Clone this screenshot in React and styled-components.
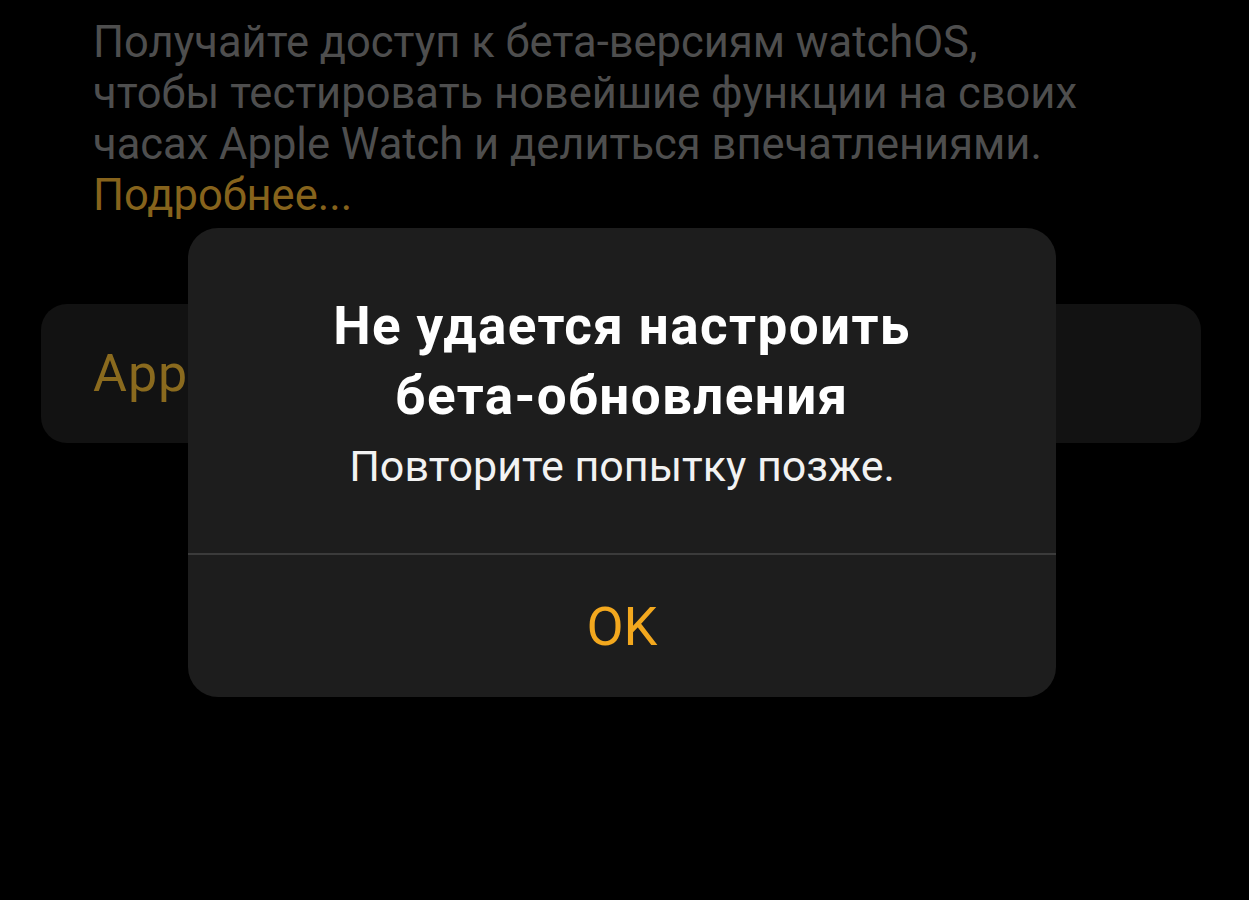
import React from 'react';
import styled, { createGlobalStyle } from 'styled-components';

const Global = createGlobalStyle`
  html, body {
    margin: 0;
    padding: 0;
    background: #000;
  }
  body {
    font-family: Roboto, "Liberation Sans", sans-serif;
    -webkit-font-smoothing: antialiased;
  }
`;

const S = {
  Screen: styled.main`
    position: relative;
    width: 1249px;
    height: 900px;
    overflow: hidden;
    background: #000;
    padding-top: 17px;
    box-sizing: border-box;
  `,
  Footer: styled.p`
    margin: 0;
    padding: 0 93px;
    font-size: 43.5px;
    line-height: 51px;
    color: #4e4e4e;
    white-space: nowrap;
  `,
  Link: styled.span`
    color: #86631c;
  `,
  Group: styled.section`
    margin: 83px 48px 0 41px;
    height: 139px;
    border-radius: 26px;
    background: #121212;
    display: flex;
    align-items: center;
    padding-left: 52px;
  `,
  GroupLabel: styled.span`
    font-size: 52px;
    letter-spacing: 1px;
    color: #8a6a1e;
  `,
  Alert: styled.div`
    position: absolute;
    left: 188px;
    top: 228px;
    width: 868px;
    height: 469px;
    border-radius: 30px;
    background: #1d1d1d;
    display: flex;
    flex-direction: column;
    overflow: hidden;
  `,
  Body: styled.div`
    padding: 63px 30px 0;
    height: 327px;
    box-sizing: border-box;
    border-bottom: 2px solid #3b3b3b;
    text-align: center;
  `,
  Title: styled.h2`
    margin: 0;
    font-size: 53px;
    line-height: 70px;
    font-weight: 700;
    letter-spacing: 1.4px;
    color: #fff;
    white-space: nowrap;
  `,
  Message: styled.p`
    margin: 15px 0 0;
    font-size: 43px;
    line-height: 40px;
    color: #f2f2f2;
  `,
  Action: styled.button`
    flex: 1;
    border: 0;
    background: transparent;
    font-family: inherit;
    font-size: 54px;
    color: #f3a81e;
    padding: 0;
    cursor: pointer;
  `,
};

const App = () => {
  return (
    <>
      <Global />
      <S.Screen>
        <S.Footer>
          Получайте доступ к бета-версиям watchOS,
          <br />
          чтобы тестировать новейшие функции на своих
          <br />
          часах Apple Watch и делиться впечатлениями.
          <br />
          <S.Link>Подробнее...</S.Link>
        </S.Footer>
        <S.Group>
          <S.GroupLabel>Apple Watch</S.GroupLabel>
        </S.Group>
        <S.Alert role="alertdialog">
          <S.Body>
            <S.Title>
              Не удается настроить
              <br />
              бета-обновления
            </S.Title>
            <S.Message>Повторите попытку позже.</S.Message>
          </S.Body>
          <S.Action>OK</S.Action>
        </S.Alert>
      </S.Screen>
    </>
  );
};

export default App;
